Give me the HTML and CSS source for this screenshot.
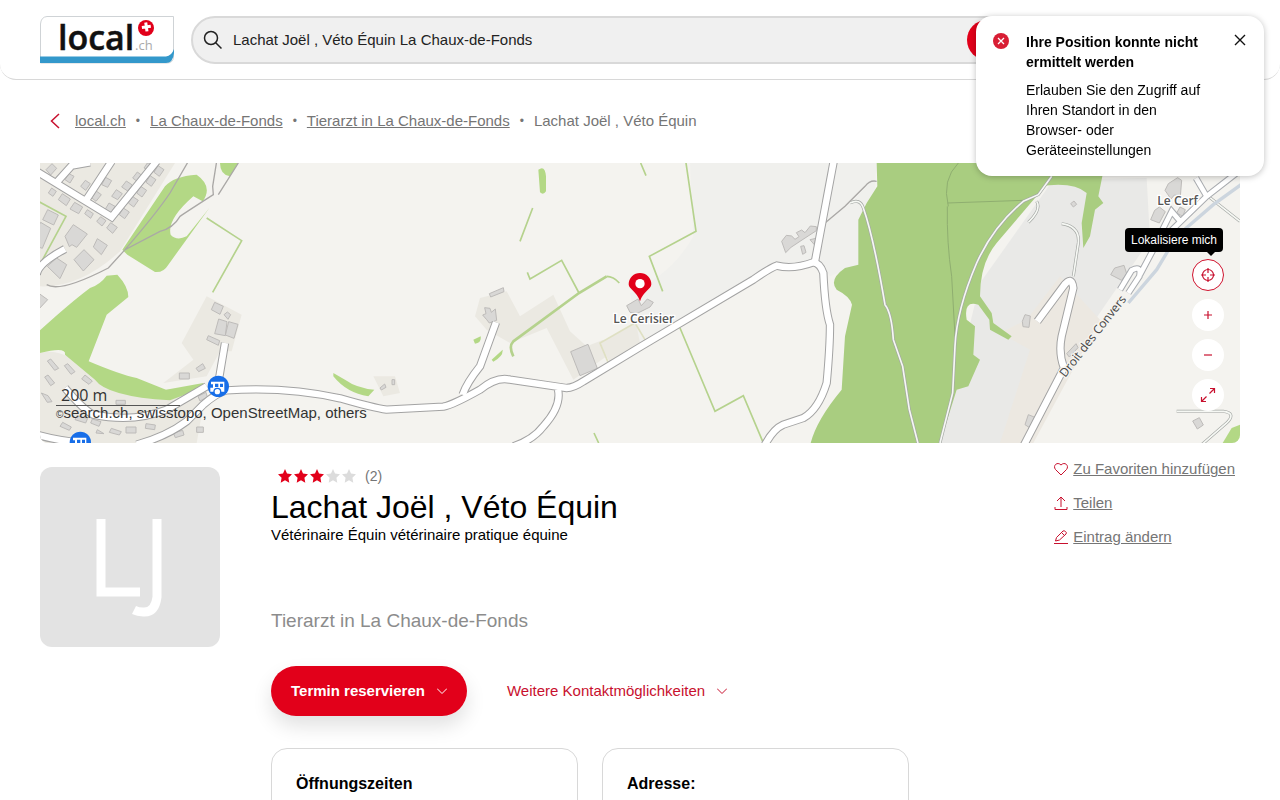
FILE: index.html
```html
<!DOCTYPE html>
<html lang="de">
<head>
<meta charset="utf-8">
<meta name="viewport" content="width=device-width, initial-scale=1">
<title>Lachat Joël , Véto Équin – local.ch</title>
<link rel="stylesheet" href="styles.css">
</head>
<body>
<header class="header">
  <a class="logo" href="#" aria-label="local.ch">
    <svg width="134" height="48" viewBox="0 0 134 48">
      <path d="M7 0.500H133.500V41Q133 47 127 47H0.500V8Q1 1 7 .5Z" fill="#fff" stroke="#cfd3d6"/>
      <path d="M0 40.500H126Q131.500 40 134 33V37Q133 47 126 47H0Z" fill="#3398cb"/>
      <text class="logo-name" x="18" y="34">local</text>
      <text class="logo-tld" x="95" y="34">.ch</text>
      <circle cx="106" cy="12" r="8" fill="#e1001a"/>
      <path d="M106.500 6.500v9M102 11h9" stroke="#fff" stroke-width="3" transform="rotate(-8 106 12)"/>
    </svg>
  </a>
  <form class="search">
    <svg width="20" height="20" viewBox="0 0 20 20" fill="none" stroke="#222" stroke-width="1.500"><circle cx="8" cy="8" r="6.500"/><path d="M12.700 12.700 18.500 18.500"/></svg>
    <input type="text" aria-label="Suche" value="Lachat Joël , Véto Équin La Chaux-de-Fonds">
    <button class="search-go" type="submit" aria-label="Suchen"></button>
  </form>
</header>

<aside class="toast" role="alert">
  <svg class="toast-icon" width="16" height="16" viewBox="0 0 16 16"><circle cx="8" cy="8" r="8" fill="#d81e34"/><path d="m5 5 6 6m0-6-6 6" stroke="#fff" stroke-width="1.300"/></svg>
  <div class="toast-text">
    <strong>Ihre Position konnte nicht ermittelt werden</strong>
    <p>Erlauben Sie den Zugriff auf Ihren Standort in den Browser- oder Geräteeinstellungen</p>
  </div>
  <button class="toast-close" type="button" aria-label="Schliessen"><svg width="12" height="12" viewBox="0 0 12 12"><path d="m1 1 10 10m0-10L1 11" stroke="#111" stroke-width="1.400"/></svg></button>
</aside>

<main class="page">
  <nav class="crumbs" aria-label="Breadcrumb">
    <a class="back" href="#" aria-label="Zurück"><svg width="10" height="16" viewBox="0 0 10 16" fill="none" stroke="#c8102e" stroke-width="1.500"><path d="M9 1 1.500 8 9 15"/></svg></a>
    <a href="#">local.ch</a><span class="dot">•</span><a href="#">La Chaux-de-Fonds</a><span class="dot">•</span><a href="#">Tierarzt in La Chaux-de-Fonds</a><span class="dot">•</span><span>Lachat Joël , Véto Équin</span>
  </nav>

  <section class="map" aria-label="Karte">
    <svg class="map-art" viewBox="0 10 3600 840" preserveAspectRatio="xMidYMid slice">
      <defs>
        <g id="roads" fill="none">
          <path d="M-10 35 215 172 350 5M50 68 95 18 150 8M138 122 215 5"/>
          <path d="M-10 345 Q-5 310 75 268" />
          <path d="M-10 825Q60 845 150 852M290 855Q380 830 440 785L490 735Q530 700 560 692Q740 680 900 716Q1000 745 1040 750L1210 741Q1240 735 1320 690Q1370 650 1410 660L1580 685Q1600 685 1630 665L1800 562 2140 360Q2190 325 2210 318Q2260 330 2320 308Q2340 310 2350 340Q2355 450 2370 495Q2370 560 2360 670Q2335 750 2290 775L2230 795Q2200 808 2175 855"/>
          <path d="M500 680 380 750Q280 790 160 765Q130 750 75 685M535 670 555 550"/>
          <path d="M1268 705Q1280 670 1320 620L1368 488M1554 690Q1565 740 1510 800 1480 840 1420 860"/>
          <path d="M2325 305 2382 0"/>
          <path d="M2992 485 3070 380Q3095 345 3100 385L3065 530Q3055 580 3072 625L2950 860"/>
        </g>
        <g id="lanes" fill="none">
          <path d="M3240 390 3275 332Q3305 315 3298 350L3265 400M3300 345 3345 260 3500 110 3590 40M3355 235 3395 155 3425 190M3468 55 3500 110"/>
        </g>
        <g id="tracks" fill="none">
          <path d="M2430 130Q2460 115 2470 145Q2500 230 2535 435Q2555 460 2560 540L2588 620 2608 750 2635 855"/>
          <path d="M2990 125Q3005 150 2965 188M3065 192Q3120 200 3115 250L3100 350M3410 755H3550Q3590 760 3560 790L3485 855M3505 110 3600 185"/>
          <path d="M3035 50 2995 105 2950 125Q2860 200 2810 310 2750 450 2745 560L2738 700 2700 850"/>
        </g>
      </defs>
      <rect y="10" width="3600" height="840" fill="#f4f3ef"/>
      <g fill="#ebe9e2">
        <path d="M0 10H405L240 275Q120 385 0 380Z"/>
        <path d="M0 580Q80 560 160 655L370 690 500 680 470 850H0Z"/>
        <path d="M500 410 605 465 575 575H540L500 650 370 670 460 600 425 550Z"/>
        <path d="M1320 415 1400 395 1440 470 1540 405 1590 515 1640 560 1690 540 1700 590 1600 660 1520 505 1410 550 1340 510 1305 470Z"/>
        <path d="M1000 650H1065L1080 700 1030 710ZM1680 550 1790 490 1810 550 1710 610Z"/>
      </g>
      <path d="M1950 10H2510L2490 300 2370 350 2330 300 2200 320Q1900 490 1800 550L1770 400Q1900 340 1960 230Z" fill="#f0f0ed"/>
      <path d="M2820 370 3040 60 3320 55 3330 240 3070 620 2900 860H2700Z" fill="#e9e9e7"/>
      <path d="M3060 350 3180 480 2980 850H2880L2970 570 2880 520 2960 480Z" fill="#ece8e1"/>
      <g fill="#b3d885">
        <path d="M247 270 375 80Q400 50 470 45 520 80 488 125L460 110Q380 180 392 225 410 245 440 230L508 145 385 315Q370 340 345 337L262 285Z"/>
        <path d="M540 10H595L570 50Q540 45 540 10Z"/>
        <path d="M0 512Q90 430 150 385 180 375 200 348L232 345Q265 380 265 412L200 465 146 605Q240 645 290 655L378 690 490 670 490 685 390 722Q200 710 165 660L75 585Q80 560 0 580Z"/>
        <path d="M1495 30Q1515 15 1518 50V95Q1510 108 1500 98ZM1300 540 1322 530Q1325 550 1305 552ZM1355 600 1388 570Q1390 590 1360 606ZM880 640 915 660Q950 685 1003 690L985 710Q920 700 880 650Z"/>
        <path d="M3548 850 3575 805 3600 795V850Z"/>
      </g>
      <path d="M2510 10H3060L2985 115 2870 250Q2820 310 2820 410L2855 460 2860 490 2915 530 2905 540 2850 510 2848 480 2815 435Q2770 420 2780 480L2805 500 2800 585 2820 600 2785 680 2750 690 2700 850H2312Q2330 780 2405 690L2415 530 2436 435Q2430 410 2390 390 2365 360 2415 325L2455 315 2455 180 2480 130 2512 80Z" fill="#a9cd80"/>
      <path d="M3000 80 3050 10H3195L3175 110 3190 130 3165 150 3150 230 3130 265 3125 190 3140 100Q3100 65 3000 80Z" fill="#a9cd80"/>
      <g fill="none" stroke="#b5d28d" stroke-width="5">
        <path d="M500 175 605 243 518 398M-5 125 78 170 5 305M1478 145 1440 245M1462 338 1470 358 1565 302 1617 400M1700 350Q1720 350 1738 370M1938 10 1968 215 1828 290 1868 395M1920 505 2025 755 2110 708 2168 845M1802 10 1818 48M1662 820 1676 850"/>
        <path d="M1420 590Q1405 560 1420 545L1617 400 1700 350" stroke-width="8"/>
        <path d="M1705 610 1680 550 1785 490 1815 540" stroke="#dfe0c3"/>
      </g>
      <g class="building">
        <path d="m18 30 18-18 14 14-18 20ZM75 60l12-18 15 8-12 20ZM122 80l14-18 15 10-14 20ZM150 110l17-17 17 12-16 20ZM195 150l12-20 18 10-12 20ZM185 75l12-22 18 10-12 20ZM215 110l14-20 18 12-14 18ZM245 82l14-18 18 12-14 18ZM278 55l14-18 16 12-14 18ZM312 25l10-15h18l-12 22ZM238 165l12-20 18 12-14 20ZM265 130l12-20 18 12-14 20ZM290 100l12-20 18 12-14 20ZM318 68l12-20 18 12-14 20ZM342 38l12-20 18 12-14 20Z"/>
        <path d="m25 100 10-15 14 10-10 15ZM55 120l12-18 24 16-12 20ZM90 148l14-20 24 14-12 20ZM134 162l8-12 18 12-8 14ZM170 185l12-14 16 12-12 16ZM200 205l12-16 20 14-14 18ZM75 230l25-35 42 28-32 40-14-8-8 6ZM160 262l12-25 30 20-18 28ZM102 300l30-30 30 30-32 34ZM22 320l28-25 30 20-20 42ZM8 180l15-30 32 16-14 30ZM-10 260V210l12-22 30 18-25 60ZM-5 400l28 20-28 30Z"/>
        <path d="m514 450 10-22 26 12-10 24ZM552 465l10-8 10 8-8 14ZM524 522l12-44 25 8-5 42ZM556 526l10-40 28 8-12 42ZM500 540l5-12 34 15-4 14ZM468 626l20-14 8 14-20 10ZM418 640h30v18h-30ZM474 710l24-12 4 14-22 12ZM470 802h20v16h-20ZM22 604l10-6 24 28-12 6ZM73 618l10-6 22 24-12 8ZM125 658l10-12 22 18-10 10ZM14 652l10-6 20 24-12 8ZM4 700l20 8 12 18-14 2ZM60 800l8-12 26 14-6 10ZM105 780l6-12 32 8-6 14ZM152 790l5-12 26 8-6 14ZM208 818l6-12 30 10-6 10ZM258 802h30v18h-30ZM318 792l28 4-2 14-28-4ZM400 820l28-8 4 14-26 8ZM228 722h28v12h-28ZM168 820l4-10 20 12Z"/>
        <path d="m1348 402 42-18 2 12-40 16ZM1328 466l10-4-4-18 16 2 4 12 12-10 4 34-22 8-8-10ZM1592 576l52-22 28 72-52 22ZM1760 438l34-20 10 20 18-20 18 10-10 14-40 20-20-4ZM1020 685l14-12 4 10-14 8ZM1056 660h8v15h-8Z"/>
        <path d="m2225 245 14-18 16 2 10 10 12-8-8-12 16-8 10 8 16-20 18 2v12l-46 30-30 20-16 16ZM2282 260l10-2 6 20-10 6ZM2310 240l18-4-6 18ZM3212 345l12-20 28-8 8 25-15 20ZM2947 485l8-20 16 4-4 34-18-2ZM3080 582l28-30 6 12-26 28ZM2955 795l10-30 20 8-12 34ZM3458 784l20-10 12 22-18 12ZM3375 92l10-20 28-18 12 8-4 48-18-4-10 12ZM3332 180l12-28 14-10 18 14-18 34ZM3410 160l10-18 16 8-8 20ZM3092 132l10-8 8 10-10 8Z"/>
      </g>
      <path d="M20 375Q60 400 205 325L255 270 360 215Q400 205 420 170 450 150 520 105L518 80 530 5M255 270Q350 160 390 100L445 5M535 105 595 10M2355 190 2415 140 2475 80Q2490 60 2510 65" fill="none" stroke="#aaa8a6" stroke-width="4"/>
      <path d="M2722 130 2950 122M2725 140Q2705 60 2755 10M2722 140Q2720 250 2735 350L2745 530" fill="none" stroke="#8fae70" stroke-width="3"/>
      <use href="#tracks" stroke="#a5a8a5" stroke-width="9"/>
      <use href="#tracks" stroke="#f6f8f4" stroke-width="5"/>
      <path d="M3265 430 3350 330 3410 230 3520 135 3610 70" fill="none" stroke="#ccd5de" stroke-width="10"/>
      <use href="#lanes" stroke="#a9acb0" stroke-width="20"/>
      <use href="#lanes" stroke="#fff" stroke-width="14"/>
      <use href="#roads" stroke="#a3a3a3" stroke-width="25"/>
      <use href="#roads" stroke="#fff" stroke-width="19"/>
      <g transform="translate(535 680)"><circle r="32" fill="#176ee8"/><path d="M-22-14H18V16H8A12 12 0 0 0-12 16H-24V4H-16V-6H-22Z" fill="#fff"/><path d="M-10-8H0V2H-10ZM5-8H14V2H5Z" fill="#176ee8"/><circle cx="-3" cy="16" r="10" fill="#fff" stroke="#176ee8" stroke-width="4"/></g>
      <g transform="translate(121 848)"><circle r="32" fill="#176ee8"/><path d="M-22-14H18V16H-24V4H-16V-6H-22Z" fill="#fff"/><path d="M-10-8H0V2H-10ZM5-8H14V2H5Z" fill="#176ee8"/></g>
      <text class="place" x="1720" y="490">Le Cerisier</text>
      <text class="place" x="3352" y="137">Le Cerf</text>
      <text class="street" transform="translate(3076 655) rotate(-52)">Droit des Convers</text>
      <path d="M1800 425C1790 395 1766 388 1766 374A34 34 0 0 1 1834 374C1834 388 1810 395 1800 425Z" fill="#e2001a"/>
      <circle cx="1800" cy="372" r="14" fill="#fff"/>
    </svg>
    <div class="map-legend"><span class="scale">200 m</span><span class="credit"><small>©</small>search.ch, swisstopo, OpenStreetMap, others</span></div>
    <div class="map-tools">
      <span class="tip">Lokalisiere mich</span>
      <button class="locate" type="button" aria-label="Lokalisiere mich"><svg width="14" height="14" viewBox="0 0 14 14"><circle cx="7" cy="7" r="5.500"/><path d="M7 0v5M7 9v5M0 7h5M9 7h5"/></svg></button>
      <button type="button" aria-label="Vergrössern"><svg width="14" height="14" viewBox="0 0 14 14"><path d="M7 3v8M3 7h8"/></svg></button>
      <button type="button" aria-label="Verkleinern"><svg width="14" height="14" viewBox="0 0 14 14"><path d="M3 7h8"/></svg></button>
      <button type="button" aria-label="Vollbild"><svg width="16" height="16" viewBox="0 0 16 16"><path d="M10 1.500h4.500V6M14.500 1.500 9.500 6.500M6 14.500H1.500V10M1.500 14.500l5-5"/></svg></button>
    </div>
  </section>

  <section class="entry">
    <div class="avatar" aria-hidden="true"><svg width="72" height="100" viewBox="0 0 72 100" fill="none" stroke="#fff" stroke-width="9"><path d="M7 2V75H46M63 2V80Q61 96 49 95 44 95 40 93"/></svg></div>
    <div class="info">
      <div class="rating" aria-label="3 von 5 Sternen">
        <svg width="80" height="14" viewBox="0 0 80 14"><defs><path id="star" d="m8 0 2 4.500 5 .7-3.600 3.500.9 5L8 11.300 3.700 13.700l.9-5L1 5.200l5-.7Z"/></defs><g fill="#e2001a"><use href="#star"/><use href="#star" x="16"/><use href="#star" x="32"/></g><g fill="#dcdcdc"><use href="#star" x="48"/><use href="#star" x="64"/></g></svg>
        <span>(2)</span>
      </div>
      <h1>Lachat Joël , Véto Équin</h1>
      <p class="subtitle">Vétérinaire Équin vétérinaire pratique équine</p>
      <p class="category">Tierarzt in La Chaux-de-Fonds</p>
      <div class="cta">
        <button class="primary" type="button">Termin reservieren <svg width="10" height="6" viewBox="0 0 10 6"><path d="m0 .5 5 5 5-5"/></svg></button>
        <button class="more" type="button">Weitere Kontaktmöglichkeiten <svg width="10" height="6" viewBox="0 0 10 6"><path d="m0 .5 5 5 5-5"/></svg></button>
      </div>
      <div class="cards">
        <article class="card"><h2>Öffnungszeiten</h2></article>
        <article class="card"><h2>Adresse:</h2></article>
      </div>
    </div>
    <ul class="actions">
      <li><svg width="14" height="14" viewBox="0 0 14 14"><path d="M7 13 1.500 7.500C-1.500 4 3-1 7 3 11-1 15.500 4 12.500 7.500Z"/></svg><a href="#">Zu Favoriten hinzufügen</a></li>
      <li><svg width="14" height="14" viewBox="0 0 14 14"><path d="M7 11V1M3 5l4-4 4 4M1 11v2.500h12V11"/></svg><a href="#">Teilen</a></li>
      <li><svg width="14" height="14" viewBox="0 0 14 14"><path d="M0 13.500h14M1.500 11 2.500 7.500 9 1Q10 .3 11.500 1.500T12 4L5.500 10ZM7.500 2.500 10.500 5.500"/></svg><a href="#">Eintrag ändern</a></li>
    </ul>
  </section>
</main>
</body>
</html>
```
FILE: styles.css
```css
* { box-sizing: border-box; }
html { scrollbar-width: none; }
body { margin: 0; background: #fff; color: #000; font: 15px/20px "Liberation Sans", Arial, sans-serif; }
h1, h2, p, ul { margin: 0; padding: 0; }
button { font: inherit; border: 0; padding: 0; cursor: pointer; }
svg { display: block; flex: none; }

.header { display: flex; gap: 17px; height: 80px; padding: 16px 40px 0; border-bottom: 1px solid #d8d8d8; border-radius: 0 0 16px 16px; }
.logo-name { font: 600 34px "Open Sans", sans-serif; fill: #111; stroke: #111; stroke-width: 0.500px; }
.logo-tld { font: 13px "Open Sans", sans-serif; fill: #aaa; }
.search { display: flex; align-items: center; flex: 0 1 822px; height: 48px; padding: 0 4px 0 10px; gap: 9px; border: 2px solid #d9d9d9; border-radius: 24px; background: #f0f0f0; }
.search input { flex: 1; min-width: 0; border: 0; padding: 0 0 0 1px; background: none; font: inherit; color: #222; }
.search-go { width: 40px; height: 40px; border-radius: 50%; background: #e2001a; }

.toast { position: fixed; z-index: 2; top: 16px; right: 16px; display: flex; width: 288px; padding: 16px 18px 16px 17px; border-radius: 16px; background: #fff; font-size: 14px; box-shadow: 0 1px 6px rgba(0, 0, 0, .25); }
.toast-icon { margin: 1px 17px 0 0; }
.toast-text { flex: 1; }
.toast-text strong { display: block; margin-bottom: 8px; }
.toast-text p { max-width: 180px; }
.toast-close { align-self: flex-start; margin-top: 2px; background: none; }

.page { padding: 0 40px; }
.crumbs { display: flex; align-items: center; padding: 31px 0 32px; color: #757575; }
.crumbs a { color: #757575; }
.back { margin: 0 15px 0 10px; }
.dot { margin: 0 10px; font-size: 12px; }

.map { position: relative; height: 280px; }
.map-art { width: 100%; height: 100%; border-radius: 0 0 8px 8px; }
.place { font: 600 36px "Open Sans", sans-serif; fill: #555; stroke: #fff; stroke-width: 8px; paint-order: stroke; }
.street { font: 500 36px "Open Sans", sans-serif; fill: #444; stroke: #f4f3ef; stroke-width: 8px; paint-order: stroke; }
.building path { fill: #d9d8d6; stroke: #bdbbb9; stroke-width: 3px; }
.map-legend { position: absolute; left: 16px; bottom: 22px; display: flex; flex-direction: column; align-items: flex-start; color: #333; }
.scale { width: 124px; padding-left: 5px; border-bottom: 1px solid #555; font: 16px/20px "Open Sans", sans-serif; }
.credit { line-height: 13px; }
.credit small { font-size: 10px; }
.map-tools { position: absolute; right: 16px; top: 96px; display: grid; gap: 8px; }
.map-tools button { display: grid; place-items: center; width: 32px; height: 32px; border-radius: 50%; background: #fff; }
.map-tools svg { fill: none; stroke: #c8102e; stroke-width: 1.200px; }
.map-tools .locate { border: 1px solid #d0142f; }
.tip { position: absolute; right: 1px; bottom: calc(100% + 7px); padding: 2px 6px; border-radius: 4px; background: #000; color: #fff; font-size: 12px; white-space: nowrap; }
.tip::after { content: ""; position: absolute; right: 8px; top: 100%; border: 4px solid transparent; border-top-color: #000; }

.entry { display: flex; align-items: flex-start; padding-top: 24px; }
.avatar { display: grid; place-items: center; flex: none; width: 180px; height: 180px; margin-right: 51px; padding-top: 20px; border-radius: 12px; background: #e3e3e3; }
.info { flex: 0 1 638px; }
.rating { display: flex; align-items: center; gap: 8px; height: 18px; padding-left: 6px; color: #757575; font-size: 14px; }
h1 { margin-top: 2px; font-size: 32px; font-weight: 400; line-height: 40px; }
.subtitle { height: 84px; margin-top: -2px; }
.category { color: #8c8c8c; font-size: 19px; line-height: 24px; }
.cta { display: flex; align-items: center; gap: 40px; margin-top: 33px; }
.cta button { display: flex; align-items: center; gap: 12px; background: none; color: #c8102e; }
.cta svg { fill: none; stroke: currentColor; }
.cta .primary { height: 50px; padding: 0 20px; border-radius: 25px; background: #e2001a; color: #fff; font-weight: 700; box-shadow: 0 10px 20px rgba(0, 0, 0, .12); }
.cards { display: grid; grid-template-columns: 1fr 1fr; gap: 24px; margin-top: 32px; }
.card { min-height: 200px; padding: 25px 24px; border: 1px solid #d8d8d8; border-radius: 16px; }
h2 { font-size: 16px; line-height: 20px; }
.actions { display: grid; gap: 14px; margin: -8px 5px 0 auto; list-style: none; }
.actions li { display: flex; align-items: center; gap: 5px; }
.actions a { color: #757575; }
.actions svg { fill: none; stroke: #c8102e; }
```
